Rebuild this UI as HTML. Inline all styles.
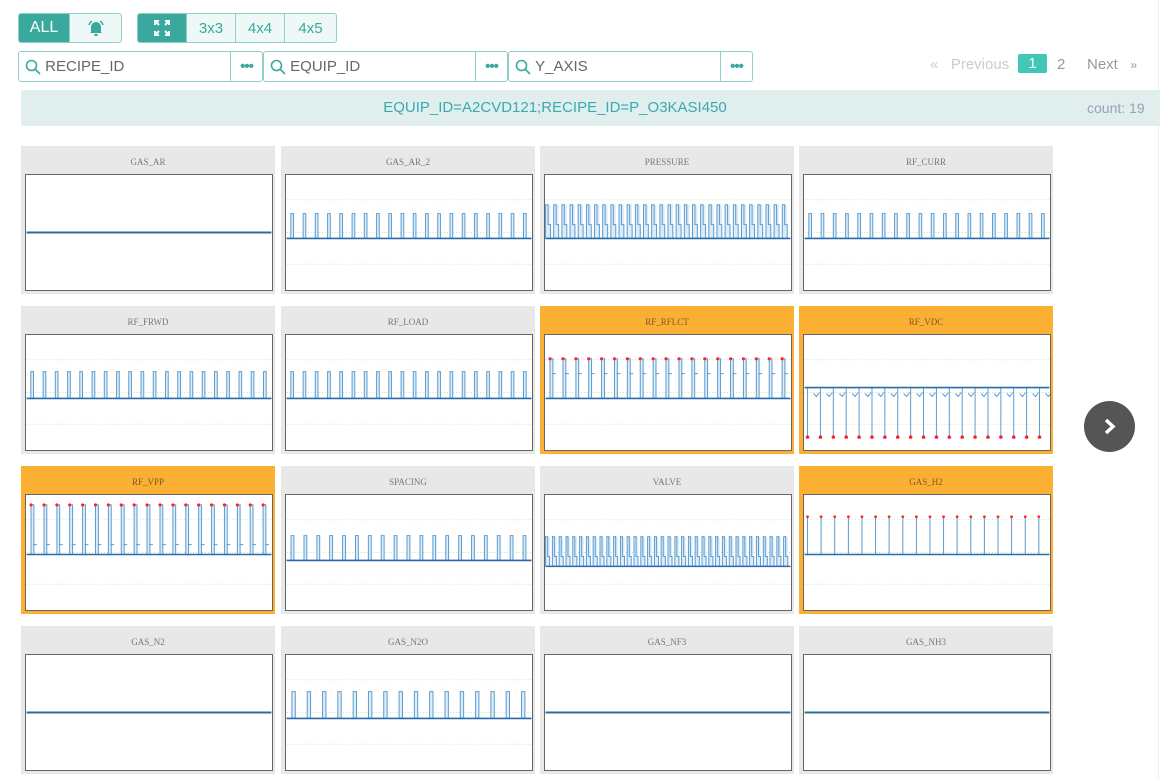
<!DOCTYPE html>
<html><head><meta charset="utf-8">
<style>
*{box-sizing:border-box;margin:0;padding:0}
body{width:1160px;height:779px;background:#fff;font-family:"Liberation Sans",sans-serif;position:relative;overflow:hidden}
.a{position:absolute}
.bg{border:1px solid #8fd0c6;border-radius:3px;display:flex;background:#eef8f6;overflow:hidden}
.bg div{display:flex;align-items:center;justify-content:center;color:#3aa99c;font-size:15px;border-left:1px solid #8fd0c6}
.bg div:first-child{border-left:none}
.bg .on{background:#38a99c;color:#fff;font-size:16px}
.inp{border:1px solid #8fd0c6;border-radius:3px;height:31px;display:flex;background:#fff}
.inp .t{flex:1;display:flex;align-items:center;color:#666;font-size:15px;padding-left:6px}
.inp .d{width:32px;border-left:1px solid #8fd0c6;display:flex;align-items:center;justify-content:center;color:#38a99c;font-size:15px;letter-spacing:-1px;font-weight:bold}
.tile{position:absolute;width:254px;height:148px;background:#e8e8e8}
.tile.o{background:#fbb034}
.tile .n{position:absolute;top:11px;left:0;width:100%;text-align:center;font-family:"Liberation Serif",serif;font-size:9px;color:#777}
.tile.o .n{color:#7a5b22}
.tile svg{position:absolute;left:4px;top:28px;background:#fff;border:1px solid #666}
</style></head><body>
<div class="a bg" style="left:18px;top:13px;width:104px;height:30px">
 <div class="on" style="width:50px">ALL</div>
 <div style="flex:1"><svg width="18" height="18" viewBox="0 0 18 18"><path d="M4 13V8a5 5 0 0 1 10 0v5l1 1H3z M7 15h4a2 2 0 0 1-4 0z" fill="#38a99c"/><path d="M2 6q1-3 3-4 M16 6q-1-3-3-4" stroke="#38a99c" stroke-width="1.5" fill="none"/></svg></div>
</div>
<div class="a bg" style="left:137px;top:13px;width:200px;height:30px">
 <div class="on" style="width:48px"><svg width="16" height="16" viewBox="0 0 16 16" stroke="#fff" stroke-width="2" fill="none"><path d="M1 5V1h4M1 1l4 4M15 5V1h-4M15 1l-4 4M1 11v4h4M1 15l4-4M15 11v4h-4M15 15l-4-4"/></svg></div>
 <div style="width:49px">3x3</div><div style="width:49px">4x4</div><div style="flex:1">4x5</div>
</div>
<div class="a inp" style="left:18px;top:51px;width:245px"><div class="t"><svg width="16" height="16" viewBox="0 0 16 16" stroke="#38a99c" stroke-width="1.6" fill="none"><circle cx="6.5" cy="6.5" r="5"/><path d="M10 10l5 5"/></svg>&nbsp;RECIPE_ID</div><div class="d">•••</div></div>
<div class="a inp" style="left:263px;top:51px;width:245px"><div class="t"><svg width="16" height="16" viewBox="0 0 16 16" stroke="#38a99c" stroke-width="1.6" fill="none"><circle cx="6.5" cy="6.5" r="5"/><path d="M10 10l5 5"/></svg>&nbsp;EQUIP_ID</div><div class="d">•••</div></div>
<div class="a inp" style="left:508px;top:51px;width:245px"><div class="t"><svg width="16" height="16" viewBox="0 0 16 16" stroke="#38a99c" stroke-width="1.6" fill="none"><circle cx="6.5" cy="6.5" r="5"/><path d="M10 10l5 5"/></svg>&nbsp;Y_AXIS</div><div class="d">•••</div></div>
<div class="a" style="left:930px;top:56px;font-size:15px;color:#ccc">«&nbsp;&nbsp; Previous</div>
<div class="a" style="left:1018px;top:54px;width:29px;height:19px;background:#42c6b6;border-radius:2px;color:#fff;font-size:15px;text-align:center;line-height:19px">1</div>
<div class="a" style="left:1057px;top:56px;font-size:15px;color:#999">2</div>
<div class="a" style="left:1087px;top:56px;font-size:15px;color:#999">Next&nbsp;&nbsp; <span style="font-size:12px">»</span></div>
<div class="a" style="left:21px;top:90px;width:1139px;height:36px;background:#e0eeed;border-radius:3px 0 0 3px"></div>
<div class="a" style="left:21px;top:99px;width:1068px;text-align:center;font-size:15px;color:#3aaab0">EQUIP_ID=A2CVD121;RECIPE_ID=P_O3KASI450</div>
<div class="a" style="left:1087px;top:100px;font-size:14px;color:#9aa0b8">count: 19</div>
<div class="a" style="left:1084px;top:401px;width:51px;height:51px;border-radius:50%;background:#555"><svg width="51" height="51"><path d="M22 19l7 6.5-7 6.5" stroke="#fff" stroke-width="3.5" fill="none"/></svg></div>
<div class="a" style="left:1158px;top:0;width:1px;height:779px;background:#eee"></div>
<div id="g"></div>
<script>
var specs=[
["GAS_AR",0,{t:"flat",y:58,grid:0}],["GAS_AR_2",0,{t:"sq",top:39,base:64,n:20}],["PRESSURE",0,{t:"dense",top:30,mid:50,base:64,n:30}],["RF_CURR",0,{t:"sq",top:39,base:64,n:20}],
["RF_FRWD",0,{t:"sq",top:37,base:64,n:20}],["RF_LOAD",0,{t:"sq",top:37,base:64,n:20}],["RF_RFLCT",1,{t:"sq",top:24,base:64,n:19,red:1,mid:39}],["RF_VDC",1,{t:"down",base:53,bot:103,n:19}],
["RF_VPP",1,{t:"sq",top:10,base:60,n:19,red:1,mid:50}],["SPACING",0,{t:"sq",top:41,base:66,n:19}],["VALVE",0,{t:"dense",top:42,mid:62,base:72,n:36}],["GAS_H2",1,{t:"spike",top:22,base:60,n:18}],
["GAS_N2",0,{t:"flat",y:58,grid:0}],["GAS_N2O",0,{t:"sq",top:37,base:64,n:16}],["GAS_NF3",0,{t:"flat",y:58,grid:0}],["GAS_NH3",0,{t:"flat",y:58,grid:0}]];
var xs=[21,281,540,799],ys=[146,306,466,626],h="";
specs.forEach(function(s,i){
 var x=xs[i%4],y=ys[Math.floor(i/4)],c=s[2],W=247,H=116,p="";
 if(c.grid!==0){[25,58,90].forEach(function(g){p+='<line x1="0" x2="'+W+'" y1="'+g+'" y2="'+g+'" stroke="#bfe6b8" stroke-dasharray="1,2"/>';});}
 var st=W/c.n,d="",fill="",dots="";
 if(c.t=="flat"){d="M0 "+c.y+"H"+W;}
 else if(c.t=="sq"){d="M0 "+c.base;for(var k=0;k<c.n;k++){var a=k*st+st*0.35,b=a+st*0.22;d+="H"+a.toFixed(1)+"V"+c.top+"H"+b.toFixed(1)+"V"+c.base;fill+='<rect x="'+a.toFixed(1)+'" y="'+c.top+'" width="'+(st*0.22).toFixed(1)+'" height="'+(c.base-c.top)+'" fill="#deeef9"/>';if(c.red){dots+='<circle cx="'+a.toFixed(1)+'" cy="'+c.top+'" r="1.6" fill="#f22"/>';d+="M"+(a+2).toFixed(1)+" "+c.mid+"h4M"+b.toFixed(1)+" "+c.base;}}d+="H"+W;}
 else if(c.t=="dense"){d="M0 "+c.base;for(var k=0;k<c.n;k++){var a=k*st,m=a+st*0.3,b=a+st*0.6;d+="H"+a.toFixed(1)+"V"+c.top+"H"+m.toFixed(1)+"V"+c.mid+"H"+b.toFixed(1)+"V"+c.base;fill+='<rect x="'+a.toFixed(1)+'" y="'+c.top+'" width="'+(st*0.6).toFixed(1)+'" height="'+(c.base-c.top)+'" fill="#dcecf8"/>';}d+="H"+W;}
 else if(c.t=="down"){d="M0 "+c.base+"H"+W;for(var k=0;k<c.n;k++){var a=k*st+3;d+="M"+a.toFixed(1)+" "+c.base+"V"+c.bot+"M"+(a+6).toFixed(1)+" "+(c.base+6)+"l3 3 3-4";dots+='<circle cx="'+a.toFixed(1)+'" cy="'+c.bot+'" r="1.8" fill="#f22"/>';}}
 else if(c.t=="spike"){d="M0 "+c.base+"H"+W;for(var k=0;k<c.n;k++){var a=k*st+3;d+="M"+a.toFixed(1)+" "+c.base+"V"+c.top;dots+='<circle cx="'+a.toFixed(1)+'" cy="'+c.top+'" r="1.4" fill="#f22"/>';}}
 p+=fill+'<path d="'+d+'" stroke="#5b9bd0" stroke-width="1" fill="none"/>';
 if(c.t=="flat")p='<path d="'+d+'" stroke="#2a6f9a" stroke-width="2" fill="none"/>';
 else p+='<path d="M0 '+(c.t=="down"||c.t=="spike"?c.base:c.base)+'H'+W+'" stroke="#2a6aa8" stroke-width="1.6"/>';
 p+=dots;
 h+='<div class="tile'+(s[1]?' o':'')+'" style="left:'+x+'px;top:'+y+'px"><div class="n">'+s[0]+'</div><svg width="248" height="117" viewBox="0 0 '+W+' '+H+'">'+p+'</svg></div>';
});
document.getElementById("g").innerHTML=h;
</script>
</body></html>
